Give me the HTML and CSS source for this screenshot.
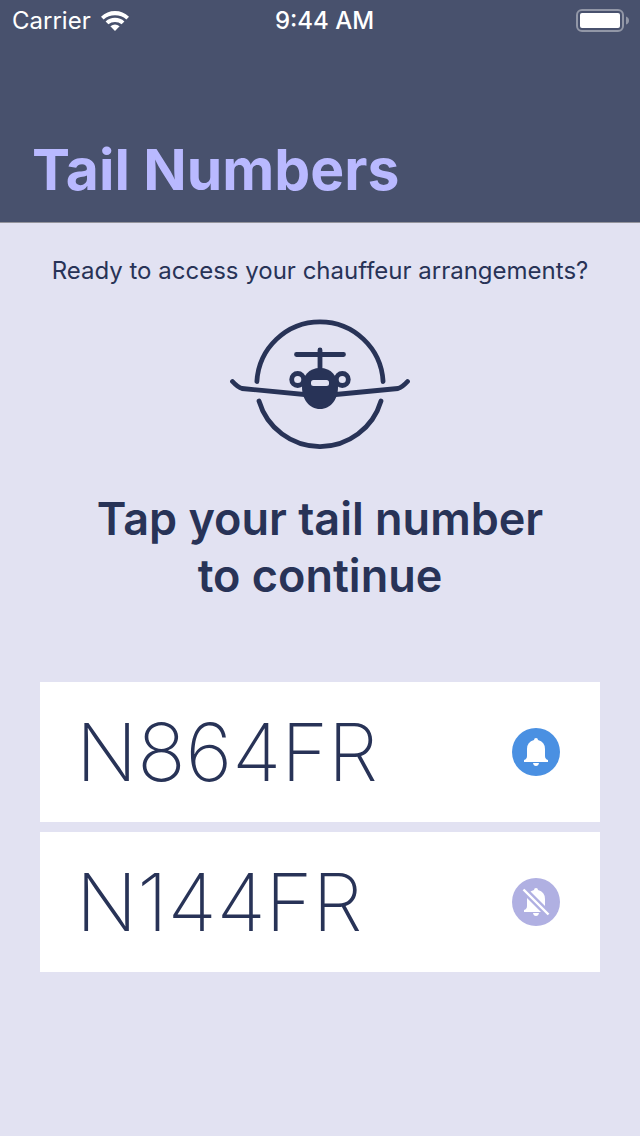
FILE: index.html
```html
<!DOCTYPE html>
<html lang="en">
<head>
<meta charset="utf-8">
<meta name="viewport" content="width=device-width, initial-scale=1">
<title>Tail Numbers</title>
<link rel="stylesheet" href="styles.css">
</head>
<body>
<header class="header">
  <div class="status">
    <div class="status-carrier">
      <span>Carrier</span>
      <svg class="wifi" viewBox="0 0 28 20" aria-hidden="true">
        <path d="M0 5.800Q6 0 14 0T28 5.800L25.400 8.400Q20.500 4.200 14 4.200T2.600 8.400Z"/>
        <path d="M4.600 10.400Q8.500 6.700 14 6.700T23.400 10.400L20.600 13.200Q17.800 10.900 14 10.900T7.400 13.200Z"/>
        <path d="M9.400 15.200Q14 11.600 18.600 15.200L14 20Z"/>
      </svg>
    </div>
    <time class="status-time">9:44 AM</time>
    <svg class="battery" viewBox="0 0 53 24" aria-hidden="true">
      <rect class="battery-case" x="1" y="1" width="46" height="21" rx="5"/>
      <rect class="battery-level" x="4" y="4" width="40" height="15" rx="2"/>
      <path class="battery-tip" d="M50 7.500Q53 8.500 53 11.500T50 15.500Z"/>
    </svg>
  </div>
  <h1 class="title">Tail Numbers</h1>
</header>
<main class="content">
  <p class="intro">Ready to access your chauffeur arrangements?</p>
  <svg class="plane" viewBox="0 0 180 130" aria-hidden="true">
    <g class="plane-line">
      <path d="M26.900 62.500A63.200 63.200 0 0 1 153.100 62.500"/>
      <path d="M29 82A63.600 63.600 0 0 0 151 82"/>
      <path d="M90 52V31M66.500 35.500H113.500"/>
      <path d="M2.500 62.500Q8 68.500 12 69.500L90 77L168 69.500Q172 68.500 177.500 62.500"/>
      <circle cx="67.700" cy="60.500" r="6"/>
      <circle cx="112.300" cy="60.500" r="6"/>
    </g>
    <path class="plane-body" d="M90 49C101 49 108 57 108 68C108 80 101 90 90 90S72 80 72 68C72 57 79 49 90 49Z"/>
    <rect class="plane-window" x="81" y="61" width="18" height="6" rx="2.500"/>
  </svg>
  <h2 class="prompt">Tap your tail number<br>to continue</h2>
  <div class="list">
    <button class="card" type="button">
      <span class="number">N864FR</span>
      <svg class="bell bell-on" viewBox="0 0 48 48" role="img" aria-label="Notifications on">
        <circle class="bell-disc" cx="24" cy="24" r="24"/>
        <path class="bell-shape" d="M24 10Q26 10 26 12Q33 14 33 21V28Q33 31 36 32V34H12V32Q15 31 15 28V21Q15 14 22 12Q22 10 24 10ZM21 35H27Q26.500 38 24 38T21 35Z"/>
      </svg>
    </button>
    <button class="card" type="button">
      <span class="number">N144FR</span>
      <svg class="bell bell-off" viewBox="0 0 48 48" role="img" aria-label="Notifications off">
        <circle class="bell-disc" cx="24" cy="24" r="24"/>
        <path class="bell-shape" d="M24 10Q26 10 26 12Q33 14 33 21V28Q33 31 36 32V34H12V32Q15 31 15 28V21Q15 14 22 12Q22 10 24 10ZM21 35H27Q26.500 38 24 38T21 35Z"/>
        <path class="slash-gap" d="M11 11L37 37"/>
        <path class="slash" d="M11.500 11.500L36.500 36.500"/>
      </svg>
    </button>
  </div>
</main>
</body>
</html>
```
FILE: styles.css
```css
* {
  box-sizing: border-box;
}

body {
  margin: 0;
  min-height: 100vh;
  background: #e2e2f2;
  color: #283357;
  font-family: Inter, "Liberation Sans", sans-serif;
}

h1, h2, p {
  margin: 0;
}

.header {
  background: #48516d;
  border-bottom: 1px solid #94949c;
}

.status {
  display: grid;
  grid-template-columns: 1fr auto 1fr;
  align-items: center;
  height: 42px;
  padding: 0 11px 0 12px;
  color: #fff;
  font-size: 24px;
  line-height: 42px;
}

.status-carrier {
  display: flex;
  align-items: center;
  gap: 10px;
}

.wifi {
  width: 28px;
  height: 20px;
  fill: #fff;
}

.status-time {
  padding-left: 8px;
  font-weight: 500;
}

.battery {
  justify-self: end;
  width: 53px;
  height: 24px;
}

.battery-case {
  fill: none;
  stroke: #9297a7;
  stroke-width: 2;
}

.battery-level {
  fill: #fff;
}

.battery-tip {
  fill: #9297a7;
}

.title {
  padding: 91px 32px 15px;
  color: #b9b9ff;
  font-size: 57px;
  line-height: 74px;
  font-weight: 700;
}

.content {
  display: flex;
  flex-direction: column;
  align-items: center;
  padding: 32px 40px;
}

.intro {
  font-size: 24px;
  line-height: 32px;
}

.plane {
  width: 180px;
  height: 130px;
  margin-top: 32px;
}

.plane-line {
  fill: none;
  stroke: #283357;
  stroke-width: 4.8;
  stroke-linecap: round;
  stroke-linejoin: round;
}

.plane-body {
  fill: #283357;
}

.plane-window {
  fill: #e2e2f2;
}

.prompt {
  margin-top: 41px;
  font-size: 45px;
  line-height: 57px;
  font-weight: 600;
  text-align: center;
}

.list {
  display: flex;
  flex-direction: column;
  align-self: stretch;
  gap: 10px;
  margin-top: 78px;
}

.card {
  display: flex;
  align-items: center;
  justify-content: space-between;
  padding: 20px 40px 20px 36px;
  border: 0;
  border-radius: 0;
  background: #fff;
  color: inherit;
  font: inherit;
}

.number {
  font-size: 80px;
  line-height: 100px;
  font-weight: 200;
}

.bell {
  width: 48px;
  height: 48px;
}

.bell-on {
  color: #4a90e2;
}

.bell-off {
  color: #b0b0e2;
}

.bell-disc {
  fill: currentColor;
}

.bell-shape {
  fill: #fff;
}

.slash-gap {
  stroke: currentColor;
  stroke-width: 7;
}

.slash {
  stroke: #fff;
  stroke-width: 2.4;
}
```
